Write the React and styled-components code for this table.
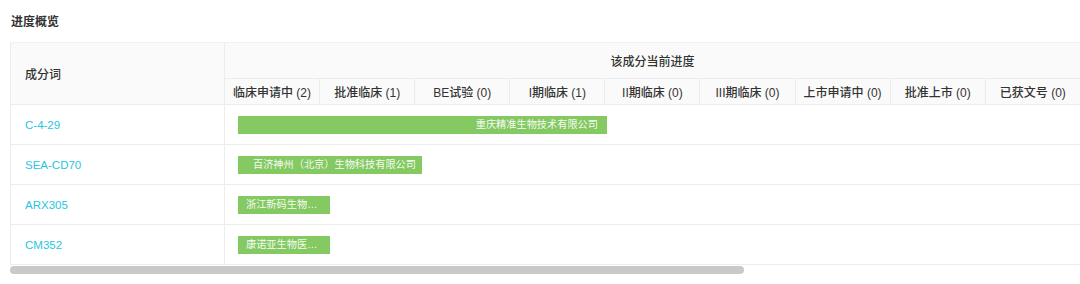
import React from "react";
import styled, { createGlobalStyle } from "styled-components";

const GlobalStyle = createGlobalStyle`
  body {
    margin: 0;
    background: #ffffff;
    font-family: "Liberation Sans", "Noto Sans CJK SC", sans-serif;
    color: #333333;
  }
`;

const Page = styled.div`
  width: 1080px;
  padding: 14px 0 0 10px;
  box-sizing: border-box;
`;

const Title = styled.div`
  font-size: 12px;
  font-weight: 700;
  line-height: 16px;
  padding-left: 1px;
  margin-bottom: 12px;
`;

const Viewport = styled.div`
  overflow: hidden;
`;

const Table = styled.table`
  width: 1560px;
  table-layout: fixed;
  border-collapse: collapse;
  font-size: 12px;
  border-left: 1px solid #ececec;
`;

const HeadCell = styled.th`
  background: #fafafa;
  font-weight: 500;
  color: #333333;
  text-align: ${(p) => (p.$left ? "left" : "center")};
  padding: ${(p) => (p.$left ? "0 0 0 14px" : "0")};
  height: ${(p) => p.$h}px;
  border-right: 1px solid #ececec;
  border-bottom: 1px solid #ececec;
  border-top: 1px solid #f2f2f2;
  white-space: nowrap;
`;

const BlankHead = styled.th`
  background: #fafafa;
  border-bottom: 1px solid #ececec;
  border-top: 1px solid #f2f2f2;
`;

const Row = styled.tr`
  height: 40px;
  border-bottom: 1px solid #ececec;
`;

const NameCell = styled.td`
  padding: 0 0 0 14px;
  border-right: 1px solid #ececec;
  color: #27c6de;
  font-size: 11.5px;
`;

const StageCell = styled.td`
  padding: 0 0 0 13px;
`;

const Bar = styled.div`
  width: ${(p) => p.$w}px;
  height: 18px;
  background: #84c962;
  color: rgba(255, 255, 255, 0.95);
  font-size: 10.2px;
  line-height: 18px;
  box-sizing: border-box;
  padding: 0 ${(p) => p.$pr}px 0 ${(p) => p.$pl}px;
  text-align: ${(p) => p.$align};
  white-space: nowrap;
  overflow: hidden;
  text-overflow: ellipsis;
`;

const ScrollTrack = styled.div`
  height: 8px;
  margin-top: 1px;
`;

const ScrollThumb = styled.div`
  width: 734px;
  height: 100%;
  background: #c9c9c9;
  border-radius: 4px;
`;

const stages = [
  "临床申请中 (2)",
  "批准临床 (1)",
  "BE试验 (0)",
  "I期临床 (1)",
  "II期临床 (0)",
  "III期临床 (0)",
  "上市申请中 (0)",
  "批准上市 (0)",
  "已获文号 (0)",
];

const rows = [
  { name: "C-4-29", company: "重庆精准生物技术有限公司", w: 369, align: "right", pl: 8, pr: 9 },
  { name: "SEA-CD70", company: "百济神州（北京）生物科技有限公司", w: 184, align: "left", pl: 15, pr: 0 },
  { name: "ARX305", company: "浙江新码生物医药有限公司", w: 92, align: "left", pl: 8, pr: 8 },
  { name: "CM352", company: "康诺亚生物医药科技有限公司", w: 92, align: "left", pl: 8, pr: 8 },
];

export default function App() {
  return (
    <Page>
      <GlobalStyle />
      <Title>进度概览</Title>
      <Viewport>
        <Table>
          <colgroup>
            <col style={{ width: 214 }} />
            {stages.map((s) => (
              <col key={s} style={{ width: 95.1 }} />
            ))}
            <col />
          </colgroup>
          <thead>
            <tr>
              <HeadCell rowSpan={2} $left $h={35}>
                成分词
              </HeadCell>
              <HeadCell colSpan={stages.length} $h={35}>
                该成分当前进度
              </HeadCell>
              <BlankHead rowSpan={2} />
            </tr>
            <tr>
              {stages.map((s) => (
                <HeadCell key={s} $h={25}>
                  {s}
                </HeadCell>
              ))}
            </tr>
          </thead>
          <tbody>
            {rows.map((r) => (
              <Row key={r.name}>
                <NameCell>{r.name}</NameCell>
                <StageCell colSpan={stages.length + 1}>
                  <Bar $w={r.w} $align={r.align} $pl={r.pl} $pr={r.pr}>
                    {r.company}
                  </Bar>
                </StageCell>
              </Row>
            ))}
          </tbody>
        </Table>
      </Viewport>
      <ScrollTrack>
        <ScrollThumb />
      </ScrollTrack>
    </Page>
  );
}
